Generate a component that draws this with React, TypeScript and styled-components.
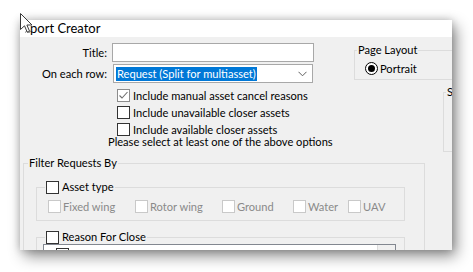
import React from 'react';
import styled, { createGlobalStyle } from 'styled-components';

const GlobalStyle = createGlobalStyle`
  html, body {
    margin: 0;
    padding: 0;
    background: #fff;
  }
  body {
    font-family: Lato, 'Noto Sans', 'Liberation Sans', sans-serif;
    font-size: 11.1px;
    color: #000;
  }
`;

const Stage = styled.div`
  position: relative;
  width: 473px;
  height: 272px;
  padding: 20px 0 0 20px;
  box-sizing: border-box;
  overflow: hidden;
`;

const Window = styled.div`
  width: 432px;
  height: 230px;
  display: flex;
  flex-direction: column;
  background: #f0f0f0;
  box-shadow: 4px 6px 14px rgba(0, 0, 0, 0.45), 0 0 8px rgba(0, 0, 0, 0.2);
  overflow: hidden;
`;

const TitleBar = styled.div`
  flex: 0 0 17px;
  background: #fff;
  padding: 1px 0 0 10px;
  box-sizing: border-box;
  font-size: 13px;
  line-height: 14px;
`;

const Body = styled.div`
  flex: 1;
  min-height: 0;
  display: flex;
  flex-direction: column;
  padding-top: 6px;
`;

const TopArea = styled.div`
  display: flex;
  align-items: flex-start;
`;

const FormColumn = styled.div`
  flex: 0 0 334px;
  display: flex;
  flex-direction: column;
`;

const SideColumn = styled.div`
  flex: 0 0 auto;
  display: flex;
  flex-direction: column;
  align-items: flex-start;
`;

const FieldRow = styled.div`
  display: grid;
  grid-template-columns: 87px 202px;
  column-gap: 5px;
  align-items: center;
  margin-bottom: 2px;
`;

const FieldLabel = styled.label`
  text-align: right;
  line-height: 14px;
`;

const TextBox = styled.div`
  height: 19px;
  box-sizing: border-box;
  border: 1px solid #a8a8a8;
  background: #fff;
`;

const Combo = styled.div`
  width: 200px;
  height: 19px;
  margin-left: 1px;
  box-sizing: border-box;
  border: 1px solid #a8a8a8;
  background: #fff;
  display: flex;
  align-items: center;
  justify-content: space-between;
  padding: 0 5px 0 2px;
`;

const Selected = styled.span`
  background: #0078d7;
  color: #fff;
  padding: 0 1px;
  line-height: 14px;
`;

const CheckList = styled.div`
  display: flex;
  flex-direction: column;
  margin-top: 2px;
  padding-left: 97px;
`;

const CheckRow = styled.label`
  display: flex;
  align-items: center;
  gap: 3px;
  height: 17px;
  line-height: 14px;
  white-space: nowrap;
`;

const Box = styled.span<{ $tone?: 'normal' | 'muted' | 'disabled' }>`
  flex: 0 0 13px;
  width: 13px;
  height: 13px;
  box-sizing: border-box;
  background: #fff;
  border: 1px solid
    ${(p) => (p.$tone === 'disabled' ? '#c9c9c9' : p.$tone === 'muted' ? '#8c8c8c' : '#333')};
  display: flex;
  align-items: center;
  justify-content: center;
`;

const Note = styled.div`
  margin-top: -3px;
  padding-left: 88px;
  line-height: 14px;
  white-space: nowrap;
`;

const Group = styled.fieldset<{ $w: number; $h?: number }>`
  margin: 0;
  padding: 0;
  min-width: 0;
  width: ${(p) => p.$w}px;
  ${(p) => (p.$h ? `height: ${p.$h}px;` : '')}
  box-sizing: border-box;
  border: 1px solid #dcdcdc;
  flex-shrink: 0;
`;

const Legend = styled.legend<{ $indent: number }>`
  margin-left: ${(p) => p.$indent}px;
  padding: 0 1px;
  line-height: 14px;
  height: 14px;
  display: flex;
  align-items: center;
  gap: 3px;
  white-space: nowrap;
`;

const PageLayoutGroup = styled(Group)`
  padding-bottom: 3px;
`;

const SideGroup = styled(Group)`
  margin: 5px 0 0 89px;
`;

const Radio = styled.span`
  width: 13px;
  height: 13px;
  box-sizing: border-box;
  border-radius: 50%;
  border: 1px solid #000;
  background: #fff;
  display: flex;
  align-items: center;
  justify-content: center;

  &::after {
    content: '';
    width: 7px;
    height: 7px;
    border-radius: 50%;
    background: #000;
  }
`;

const RadioRow = styled.label`
  display: flex;
  align-items: center;
  gap: 2px;
  height: 16px;
  margin: 3px 0 0 10px;
`;

const FilterGroup = styled(Group)`
  margin: 4px 0 0 3px;
`;

const AssetGroup = styled(Group)`
  margin: 10px 0 0 12px;
  padding: 6px 0 7px 0;
`;

const OptionRow = styled.div`
  display: flex;
  height: 13px;
  margin-left: 11px;
`;

const Option = styled.label<{ $w?: number }>`
  display: flex;
  align-items: center;
  gap: 2px;
  color: #8a8a8a;
  line-height: 13px;
  white-space: nowrap;
  ${(p) => (p.$w ? `flex: 0 0 ${p.$w}px;` : '')}
`;

const ReasonGroup = styled(Group)`
  margin: 9px 0 0 12px;
  height: 60px;
`;

const ListBox = styled.div`
  width: 353px;
  height: 40px;
  margin-left: 6px;
  box-sizing: border-box;
  border: 1px solid #828790;
  background: #fff;
  display: flex;
`;

const ListItems = styled.div`
  flex: 1;
  padding: 1px 0 0 1px;
`;

const TreeRow = styled.div`
  display: flex;
  align-items: center;
  gap: 2px;
  height: 16px;
`;

const Expander = styled.span`
  width: 9px;
  height: 9px;
  box-sizing: border-box;
  border: 1px solid #a0a0a0;
  font-size: 8px;
  line-height: 7px;
  text-align: center;
  color: #333;
`;

const ScrollTrack = styled.div`
  flex: 0 0 17px;
  border-left: 1px solid #dcdcdc;
  background: #f0f0f0;
`;

const Cursor = styled.svg`
  position: absolute;
  left: 20px;
  top: 13px;
`;

const Check = () => (
  <svg width="11" height="11" viewBox="0 0 11 11">
    <path d="M1.5 5.5 L4 8 L9.5 2" fill="none" stroke="#6e6e6e" strokeWidth="1.1" />
  </svg>
);

const Chevron = () => (
  <svg width="9" height="6" viewBox="0 0 9 6">
    <path d="M0.5 0.8 L4.5 4.8 L8.5 0.8" fill="none" stroke="#606060" strokeWidth="1" />
  </svg>
);

const options = [
  { label: 'Fixed wing', w: 87 },
  { label: 'Rotor wing', w: 87 },
  { label: 'Ground', w: 71 },
  { label: 'Water', w: 55 },
  { label: 'UAV' },
];

const App = () => {
  return (
    <>
      <GlobalStyle />
      <Stage>
        <Window>
          <TitleBar>port Creator</TitleBar>
          <Body>
            <TopArea>
              <FormColumn>
                <FieldRow>
                  <FieldLabel>Title:</FieldLabel>
                  <TextBox />
                </FieldRow>
                <FieldRow>
                  <FieldLabel>On each row:</FieldLabel>
                  <Combo>
                    <Selected>Request (Split for multiasset)</Selected>
                    <Chevron />
                  </Combo>
                </FieldRow>
                <CheckList>
                  <CheckRow>
                    <Box $tone="muted">
                      <Check />
                    </Box>
                    Include manual asset cancel reasons
                  </CheckRow>
                  <CheckRow>
                    <Box />
                    Include unavailable closer assets
                  </CheckRow>
                  <CheckRow>
                    <Box />
                    Include available closer assets
                  </CheckRow>
                </CheckList>
                <Note>Please select at least one of the above options</Note>
              </FormColumn>
              <SideColumn>
                <PageLayoutGroup $w={120}>
                  <Legend $indent={2}>Page Layout</Legend>
                  <RadioRow>
                    <Radio />
                    Portrait
                  </RadioRow>
                </PageLayoutGroup>
                <SideGroup $w={60} $h={67}>
                  <Legend $indent={2}>S</Legend>
                </SideGroup>
              </SideColumn>
            </TopArea>
            <FilterGroup $w={402} $h={120}>
              <Legend $indent={4}>Filter Requests By</Legend>
              <AssetGroup $w={369}>
                <Legend $indent={8}>
                  <Box />
                  Asset type
                </Legend>
                <OptionRow>
                  {options.map((o) => (
                    <Option key={o.label} $w={o.w}>
                      <Box $tone="disabled" />
                      {o.label}
                    </Option>
                  ))}
                </OptionRow>
              </AssetGroup>
              <ReasonGroup $w={369}>
                <Legend $indent={8}>
                  <Box />
                  Reason For Close
                </Legend>
                <ListBox>
                  <ListItems>
                    <TreeRow>
                      <Expander>+</Expander>
                      <Box />
                      Aborted
                    </TreeRow>
                  </ListItems>
                  <ScrollTrack />
                </ListBox>
              </ReasonGroup>
            </FilterGroup>
          </Body>
        </Window>
        <Cursor width="16" height="22" viewBox="0 0 16 22">
          <path
            d="M0.5 0.5 L0.5 16.5 L4.5 12.8 L7.3 19.3 L9.6 18.3 L6.9 12 L12 12 Z"
            fill="rgba(255,255,255,0.9)"
            stroke="#3a3a3a"
            strokeWidth="1"
          />
          <path d="M5 19.5 Q6.5 17.5 8 19 T11 17.5" fill="none" stroke="#555" strokeWidth="0.8" />
        </Cursor>
      </Stage>
    </>
  );
};

export default App;
